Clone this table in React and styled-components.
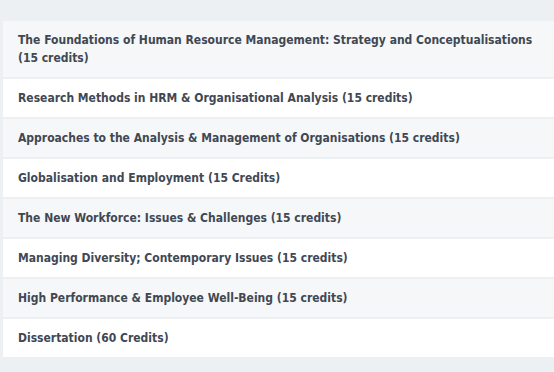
import React from "react";
import styled, { createGlobalStyle } from "styled-components";

const modules = [
  "The Foundations of Human Resource Management: Strategy and Conceptualisations (15 credits)",
  "Research Methods in HRM & Organisational Analysis (15 credits)",
  "Approaches to the Analysis & Management of Organisations (15 credits)",
  "Globalisation and Employment (15 Credits)",
  "The New Workforce: Issues & Challenges (15 credits)",
  "Managing Diversity; Contemporary Issues (15 credits)",
  "High Performance & Employee Well-Being (15 credits)",
  "Dissertation (60 Credits)",
];

function App() {
  return (
    <>
      <GlobalStyle />
      <Container>
        <ModuleList>
          {modules.map((title, i) => (
            <ModuleRow key={title} $shaded={i % 2 === 0}>
              {title}
            </ModuleRow>
          ))}
        </ModuleList>
      </Container>
    </>
  );
}

export default App;

const GlobalStyle = createGlobalStyle`
  body {
    margin: 0;
    background: #edf0f2;
    font-family: "DejaVu Sans Condensed", "Liberation Sans", sans-serif;
  }
`;
const Container = styled.div`
  padding: 21px 0 13px 3px;
`;
const ModuleList = styled.ul`
  list-style: none;
  margin: 0;
  padding: 0;
  display: flex;
  flex-direction: column;
  gap: 2px;
`;
const ModuleRow = styled.li`
  background: ${(p) => (p.$shaded ? "#f6f7f8" : "#ffffff")};
  padding: 10px 15px;
  font-size: 12px;
  font-weight: bold;
  line-height: 18px;
  color: #3f4853;
`;
